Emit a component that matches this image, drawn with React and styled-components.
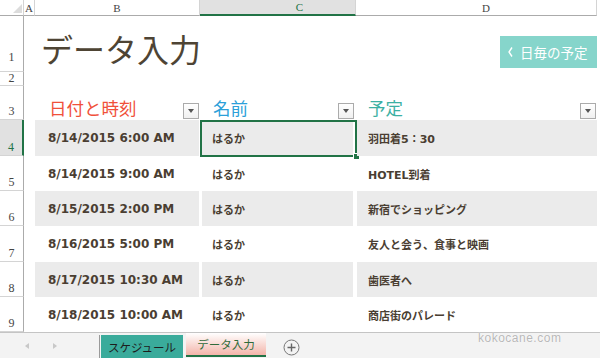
import styled, { createGlobalStyle, css } from "styled-components";

const GlobalStyle = createGlobalStyle`
  html, body {
    margin: 0;
    padding: 0;
    background: #fff;
    overflow: hidden;
  }
  body {
    font-family: "Noto Sans CJK JP", "Noto Sans", sans-serif;
  }
`;

const COLS = "24px 11px 165px 156px 241px 1fr";
const GREEN = "#217346";

const rows = [
  { n: 4, date: "8/14/2015 6:00 AM", name: "はるか", plan: "羽田着5：30", band: true, h: 36 },
  { n: 5, date: "8/14/2015 9:00 AM", name: "はるか", plan: "HOTEL到着", h: 35 },
  { n: 6, date: "8/15/2015 2:00 PM", name: "はるか", plan: "新宿でショッピング", band: true, h: 35 },
  { n: 7, date: "8/16/2015 5:00 PM", name: "はるか", plan: "友人と会う、食事と映画", h: 36 },
  { n: 8, date: "8/17/2015 10:30 AM", name: "はるか", plan: "歯医者へ", band: true, h: 35 },
  { n: 9, date: "8/18/2015 10:00 AM", name: "はるか", plan: "商店街のパレード", h: 35 },
];

export default function App() {
  return (
    <Window>
      <GlobalStyle />
      <HeaderRow>
        <Corner />
        <ColHead>A</ColHead>
        <ColHead>B</ColHead>
        <ColHead $active $shift={44}>C</ColHead>
        <ColHead $shift={20}>D</ColHead>
        <Filler />
      </HeaderRow>

      <SheetRow $h={56}>
        <RowHead $pb={8}>1</RowHead>
        <span />
        <TitleArea>
          <Title>データ入力</Title>
          <NavButton>
            <svg width="5" height="10" viewBox="0 0 5 10">
              <polyline points="4,0.5 1,5 4,9.5" fill="none" stroke="#fff" strokeWidth="1.4" />
            </svg>
            日毎の予定
          </NavButton>
        </TitleArea>
      </SheetRow>

      <SheetRow $h={14}>
        <RowHead $pb={1}>2</RowHead>
      </SheetRow>

      <SheetRow $h={34}>
        <RowHead>3</RowHead>
        <span />
        <HeadCell $m="0 1px 0 0" $pl={14} $color="#f0503a">
          日付と時刻
          <Filter />
        </HeadCell>
        <HeadCell $m="0 2px 0 2px" $pl={11} $color="#2b9fd9">
          名前
          <Filter />
        </HeadCell>
        <HeadCell $m="0 1px 0 1px" $pl={11} $color="#3cb0a3">
          予定
          <Filter />
        </HeadCell>
      </SheetRow>

      {rows.map((r) => (
        <SheetRow key={r.n} $h={r.h}>
          <RowHead $active={r.n === 4}>{r.n}</RowHead>
          <span />
          <Cell $m="0 1px 0 0" $pl={13} $fs={12} $band={r.band}>
            {r.date}
          </Cell>
          <Cell $m="0 3px 0 2px" $pl={10} $fs={11} $band={r.band}>
            {r.name}
            {r.n === 4 && <Selection />}
          </Cell>
          <Cell $m="0 0 0 1px" $pl={11} $fs={11} $band={r.band}>
            {r.plan}
          </Cell>
        </SheetRow>
      ))}

      <TabBar>
        <SheetNav>
          <Arrow $dir="left" />
          <Arrow $dir="right" />
        </SheetNav>
        <TabSep />
        <Tab>スケジュール</Tab>
        <Tab $active>データ入力</Tab>
        <AddSheet>
          <svg width="17" height="17" viewBox="0 0 17 17">
            <circle cx="8.5" cy="8.5" r="7.5" fill="none" stroke="#777" strokeWidth="1" />
            <path d="M8.5 4.5v8M4.5 8.5h8" stroke="#666" strokeWidth="1.4" />
          </svg>
        </AddSheet>
        <Watermark>kokocane.com</Watermark>
      </TabBar>
    </Window>
  );
}

const Window = styled.div`
  width: 600px;
  height: 358px;
  display: flex;
  flex-direction: column;
  overflow: hidden;
  background: #fff;
`;

const HeaderRow = styled.div`
  display: grid;
  grid-template-columns: ${COLS};
  height: 16px;
`;

const Corner = styled.div`
  position: relative;
  box-sizing: border-box;
  border-right: 1px solid #d4d4d4;
  border-bottom: 1px solid #ababab;

  &::after {
    content: "";
    position: absolute;
    right: 1px;
    bottom: 2px;
    border-style: solid;
    border-width: 0 0 9px 9px;
    border-color: transparent transparent #dcdcdc transparent;
  }
`;

const ColHead = styled.div`
  box-sizing: border-box;
  border-right: 1px solid #d4d4d4;
  border-bottom: 1px solid #ababab;
  display: flex;
  align-items: center;
  justify-content: center;
  padding-left: ${(p) => p.$shift || 0}px;
  font: 11px "Liberation Serif", serif;
  color: #444;

  ${(p) =>
    p.$active &&
    css`
      background: #e1e1e1;
      color: ${GREEN};
      border-bottom: 2px solid ${GREEN};
    `}
`;

const Filler = styled.div``;

const SheetRow = styled.div`
  display: grid;
  grid-template-columns: ${COLS};
  height: ${(p) => p.$h}px;
`;

const RowHead = styled.div`
  box-sizing: border-box;
  border-right: 1px solid #ababab;
  border-bottom: 1px solid #d4d4d4;
  display: flex;
  align-items: flex-end;
  justify-content: center;
  padding-bottom: ${(p) => p.$pb ?? 2}px;
  font: 12px "Liberation Serif", serif;
  line-height: 1;
  color: #444;

  ${(p) =>
    p.$active &&
    css`
      background: #e1e1e1;
      color: ${GREEN};
      border-right: 2px solid ${GREEN};
    `}
`;

const TitleArea = styled.div`
  grid-column: 3 / 6;
  display: flex;
  justify-content: space-between;
  align-items: flex-end;
`;

const Title = styled.div`
  padding-left: 6px;
  margin-bottom: 8px;
  font-family: "Noto Sans CJK JP", sans-serif;
  font-size: 32px;
  line-height: 1;
  color: #4e4434;
`;

const NavButton = styled.div`
  width: 97px;
  height: 32px;
  margin-bottom: 4px;
  box-sizing: border-box;
  padding-left: 8px;
  display: flex;
  align-items: center;
  gap: 7px;
  background: #86d5cb;
  color: #fff;
  font-family: "Noto Sans CJK JP", sans-serif;
  font-size: 13.5px;
`;

const HeadCell = styled.div`
  margin: ${(p) => p.$m};
  padding-left: ${(p) => p.$pl}px;
  display: flex;
  align-items: flex-end;
  justify-content: space-between;
  font-family: "Noto Sans CJK JP", sans-serif;
  font-size: 17.5px;
  line-height: 1.3;
  color: ${(p) => p.$color};
`;

const Filter = styled.div`
  width: 16px;
  height: 16px;
  margin-bottom: 1px;
  box-sizing: border-box;
  border: 1px solid #ababab;
  background: linear-gradient(#ffffff, #f0f0f0);
  display: flex;
  align-items: center;
  justify-content: center;

  &::after {
    content: "";
    border-style: solid;
    border-width: 4px 3.5px 0 3.5px;
    border-color: #555 transparent transparent transparent;
  }
`;

const Cell = styled.div`
  position: relative;
  margin: ${(p) => p.$m};
  padding-left: ${(p) => p.$pl}px;
  display: flex;
  align-items: center;
  background: ${(p) => (p.$band ? "#ebebeb" : "transparent")};
  font-family: "DejaVu Sans", "Noto Sans CJK JP", sans-serif;
  font-weight: 700;
  font-size: ${(p) => p.$fs}px;
  color: #4a3e32;
  white-space: nowrap;
`;

const Selection = styled.div`
  position: absolute;
  left: -2px;
  right: -4px;
  top: 0;
  bottom: -1px;
  border: 2px solid ${GREEN};
  pointer-events: none;

  &::after {
    content: "";
    position: absolute;
    right: -4px;
    bottom: -4px;
    width: 5px;
    height: 5px;
    background: ${GREEN};
    box-shadow: 0 0 0 1px #fff;
  }
`;

const TabBar = styled.div`
  position: relative;
  flex: 1;
  display: flex;
  align-items: stretch;
  box-sizing: border-box;
  border-top: 1px solid #c4c4c4;
  background: #f3f3f3;
`;

const SheetNav = styled.div`
  display: flex;
  align-items: center;
  gap: 24px;
  padding-left: 25px;
`;

const Arrow = styled.div`
  width: 0;
  height: 0;
  border-style: solid;
  border-color: transparent;
  border-width: 3px 0 3px 0;
  ${(p) =>
    p.$dir === "left"
      ? css`
          border-right: 4px solid #c8c8c8;
        `
      : css`
          border-left: 4px solid #c8c8c8;
        `}
`;

const TabSep = styled.div`
  width: 1px;
  margin: 2px 0 0 42px;
  background: #9a9a9a;
`;

const Tab = styled.div`
  width: ${(p) => (p.$active ? 80 : 82)}px;
  margin-left: ${(p) => (p.$active ? 3 : 1)}px;
  margin-top: ${(p) => (p.$active ? 0 : 2)}px;
  box-sizing: border-box;
  display: flex;
  align-items: center;
  justify-content: center;
  font-family: "Noto Sans CJK JP", sans-serif;
  font-size: 11.5px;
  color: #1d1d1d;
  background: #3aab9b;

  ${(p) =>
    p.$active &&
    css`
      background: linear-gradient(#ffffff, #f3b5aa);
      color: #2f6b3a;
      border-bottom: 2px solid ${GREEN};
      margin-bottom: 1px;
    `}
`;

const AddSheet = styled.div`
  margin-left: 17px;
  display: flex;
  align-items: center;
  padding-top: 3px;
`;

const Watermark = styled.div`
  position: absolute;
  left: 478px;
  top: -2px;
  font-family: "Liberation Sans", sans-serif;
  font-size: 12px;
  letter-spacing: 0.5px;
  color: #b8b8b8;
  text-shadow: 0 0 1px #fff, 0 0 1px #fff;
`;
